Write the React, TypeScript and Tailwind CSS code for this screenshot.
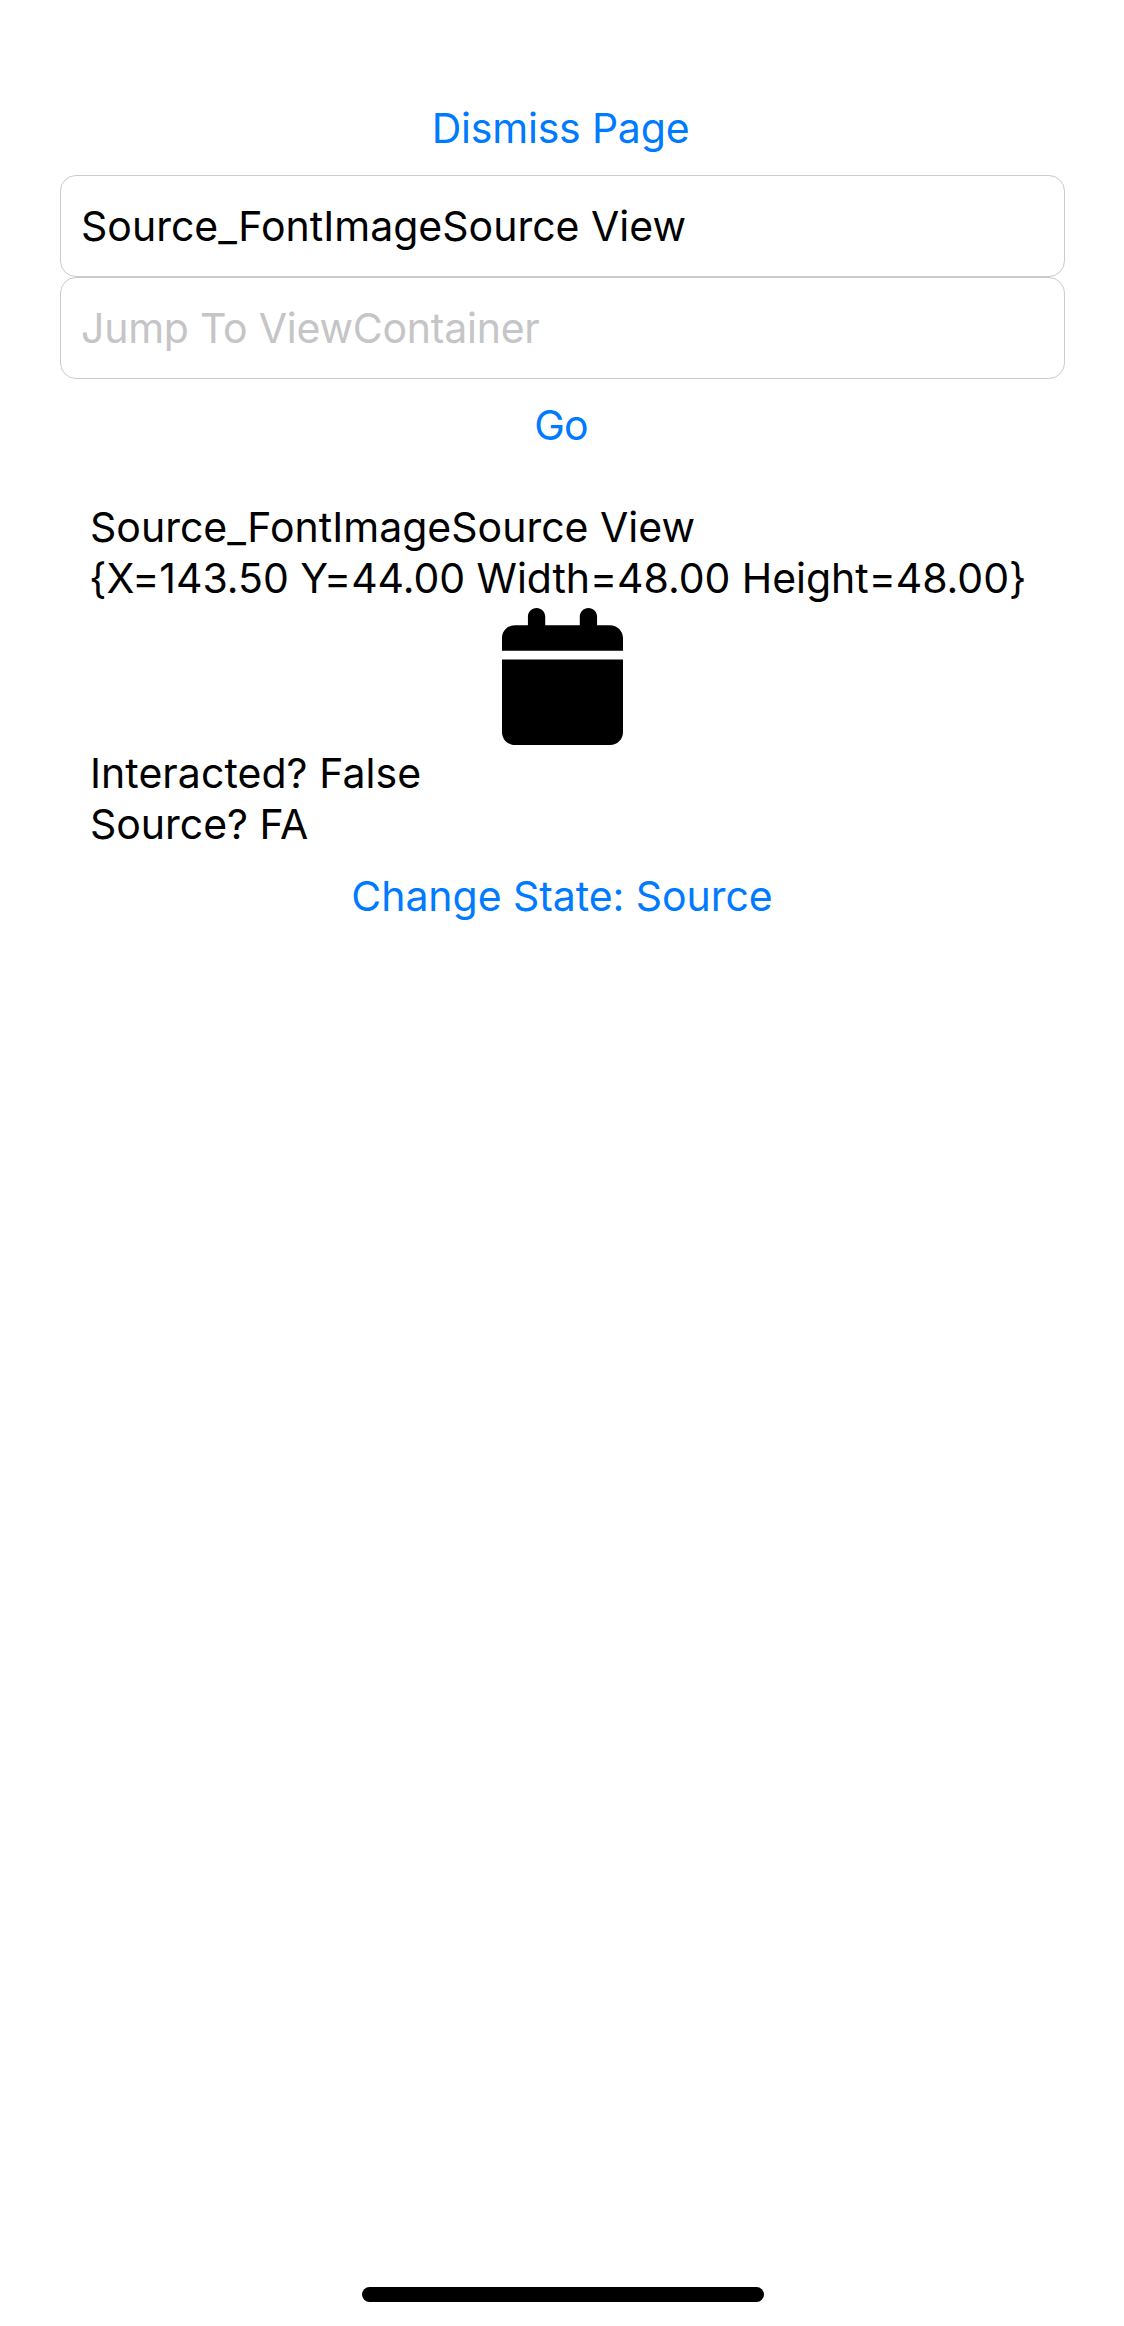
import type { ReactNode } from "react";
import { FaCalendar } from "react-icons/fa6";

function LinkButton({ children, className }: { children: ReactNode; className: string }) {
  return (
    <button type="button" className={`block w-full text-center text-[#007aff] ${className}`}>
      {children}
    </button>
  );
}

function Entry({ value, placeholder }: { value?: string; placeholder?: string }) {
  return (
    <div className="h-[102px] rounded-[16px] border border-[#cbcbcc] px-5 pt-[25px]">
      {value ? (
        <span className="tracking-[0.01px]">{value}</span>
      ) : (
        <span className="tracking-[-0.23px] text-[#c5c5c7]">{placeholder}</span>
      )}
    </div>
  );
}

export default function App() {
  return (
    <main className="flex h-[2326px] w-[1124px] flex-col bg-white font-['Inter',sans-serif] text-[41px] leading-[51px] text-black">
      <LinkButton className="mt-[103px] pr-[3px] tracking-[-0.197px]">Dismiss Page</LinkButton>
      <div className="mt-[21px] mr-[59px] ml-[60px] whitespace-nowrap">
        <Entry value="Source_FontImageSource View" />
        <Entry placeholder="Jump To ViewContainer" />
      </div>
      <LinkButton className="mt-[21px] pr-[2px] tracking-[-0.8px]">Go</LinkButton>

      <section className="mt-[51px] px-[90px] whitespace-nowrap">
        <p className="tracking-[0.01px]">Source_FontImageSource View</p>
        <p className="-ml-px tracking-[-0.04px]">{"{X=143.50 Y=44.00 Width=48.00 Height=48.00}"}</p>
        <div className="flex h-36 justify-center pt-1">
          <FaCalendar className="h-[137px] w-[121px]" preserveAspectRatio="none" />
        </div>
        <p className="tracking-[0.05px]">Interacted? False</p>
        <p className="tracking-[-0.02px]">Source? FA</p>
      </section>
      <LinkButton className="mt-[21px] tracking-[-0.054px]">Change State: Source</LinkButton>

      <div className="mt-auto mb-[24px] ml-[362px] h-[15px] w-[402px] rounded-full bg-black" />
    </main>
  );
}
